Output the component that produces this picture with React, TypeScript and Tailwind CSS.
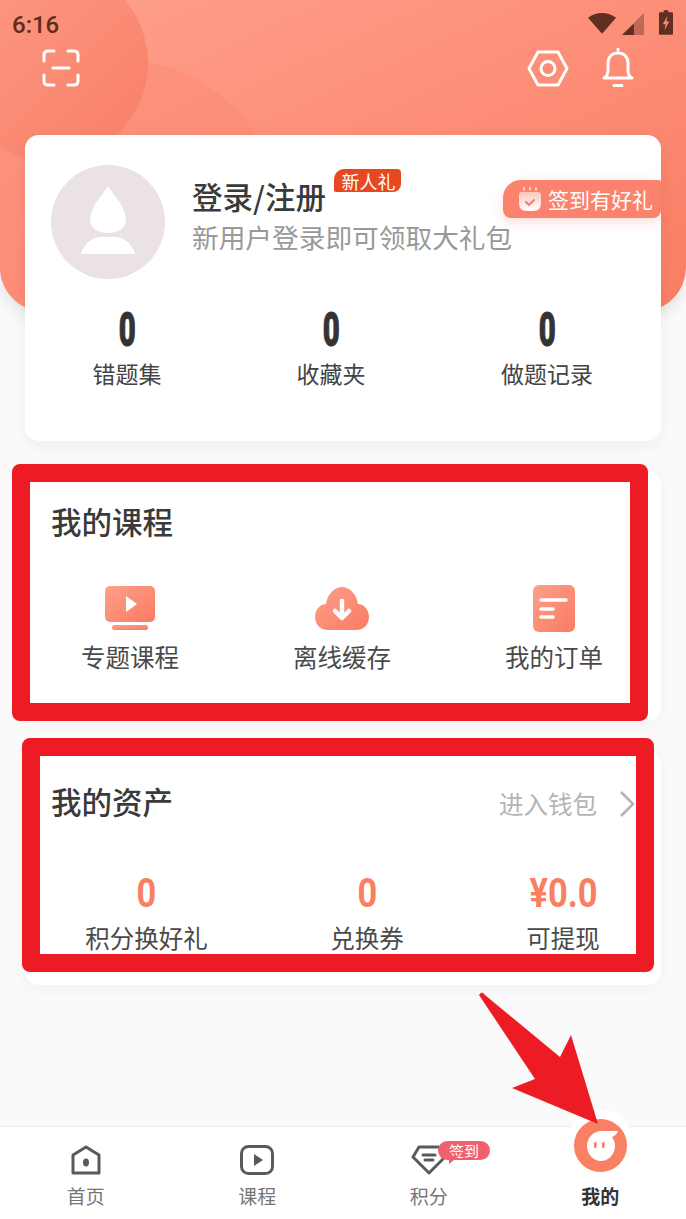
import type { ReactNode } from "react"

const stats = [
  { value: "0", label: "错题集", w: "w-[204px]" },
  { value: "0", label: "收藏夹", w: "w-[204px]" },
  { value: "0", label: "做题记录", w: "w-[228px]" },
]

const assets = [
  { value: "0", label: "积分换好礼", w: "w-[243px]" },
  { value: "0", label: "兑换券", w: "w-[198px]" },
  { value: "¥0.0", label: "可提现", w: "w-[194px]" },
]

const Gradient = ({ id }: { id: string }) => (
  <defs>
    <linearGradient id={id} x1="0" y1="0" x2="1" y2="1">
      <stop offset="0" stopColor="#fda08c" />
      <stop offset="1" stopColor="#f97b60" />
    </linearGradient>
  </defs>
)

const PlayIcon = () => (
  <svg width="52" height="44" viewBox="0 0 52 44">
    <Gradient id="tv" />
    <rect x="1" y="0" width="50" height="36" rx="5" fill="url(#tv)" />
    <path d="M22 10 L33 18 L22 26 Z" fill="#fff" />
    <rect x="8" y="39" width="36" height="5" rx="2.5" fill="url(#tv)" />
  </svg>
)

const CloudIcon = () => (
  <svg width="54" height="43" viewBox="0 0 54 43">
    <Gradient id="cloud" />
    <path
      d="M13 43 C5 43 0 37 0 30 C0 23 5 17 11 17 C12 8 19 0 27 0 C35 0 42 8 43 17 C49 17 54 23 54 30 C54 37 49 43 41 43 Z"
      fill="url(#cloud)"
    />
    <path d="M27 14 V30 M20 24 L27 31 L34 24" fill="none" stroke="#fff" strokeWidth="4.5" strokeLinecap="round" strokeLinejoin="round" />
  </svg>
)

const OrderIcon = () => (
  <svg width="42" height="47" viewBox="0 0 42 47">
    <Gradient id="order" />
    <rect x="0" y="0" width="42" height="47" rx="6" fill="url(#order)" />
    <path d="M8 15 H33 M8 24 H20 M8 32 H20" stroke="#fff" strokeWidth="3.4" strokeLinecap="round" />
  </svg>
)

const CourseItem = ({ icon, label }: { icon: ReactNode; label: string }) => (
  <div className="flex w-[212px] flex-col items-center">
    <div className="flex h-[50px] items-center">{icon}</div>
    <span className="mt-[7px] text-[24.5px] leading-[34px] text-[#4a4a4a]">{label}</span>
  </div>
)

const NavItem = ({ icon, label, active }: { icon: ReactNode; label: string; active?: boolean }) => (
  <div className="relative flex flex-1 flex-col items-center pt-[15px]">
    <div className="flex h-[36px] items-center">{icon}</div>
    <span className={active ? "mt-[5px] text-[19px] leading-[26px] font-bold text-[#333]" : "mt-[5px] text-[19px] leading-[26px] text-[#757575]"}>
      {label}
    </span>
  </div>
)

export default function App() {
  return (
    <div className="relative flex h-[1219px] w-[686px] flex-col overflow-hidden bg-[#fafafa] font-['Noto_Sans_CJK_SC','Noto_Sans',sans-serif]">
      {/* top banner */}
      <header className="relative h-[312px] shrink-0 rounded-b-[45px] bg-gradient-to-br from-[#fea18d] via-[#fd8e78] to-[#f97d63] shadow-[0_6px_16px_rgba(0,0,0,0.1)]">
        <div className="absolute inset-0 overflow-hidden rounded-b-[45px]">
          <div className="absolute top-[60px] left-[-40px] h-[320px] w-[320px] rounded-full bg-[#fb8a74]/50" />
          <div className="absolute top-[-35px] left-[-48px] h-[196px] w-[196px] rounded-full bg-gradient-to-br from-[#fc9a85] to-[#f97f66]" />
        </div>
        <div className="relative flex h-[48px] items-start justify-between pt-[9px] pr-[13px] pl-[12px]">
          <span className="font-['Roboto',sans-serif] text-[24px] leading-[32px] font-medium text-[#5f2c20]">6:16</span>
          <div className="flex items-start pt-[1px]">
            <svg width="30" height="23" viewBox="0 0 32 24" className="mt-[1px]">
              <path d="M1 7 C9 0 23 0 31 7 L16 24 Z" fill="#5f2f23" />
            </svg>
            <svg width="22" height="22" viewBox="0 0 22 22" className="mt-[3px] ml-[5px]">
              <path d="M22 0 V22 H0 Z" fill="#5f2f23" fillOpacity="0.4" />
              <path d="M12 10.5 V22 H0 Z" fill="#5f2f23" />
            </svg>
            <svg width="14" height="25" viewBox="0 0 15 26" className="ml-[15px]">
              <path d="M5 0 H10 V2 H14 Q15 2 15 3 V25 Q15 26 14 26 H1 Q0 26 0 25 V3 Q0 2 1 2 H5 Z" fill="#5f2f23" />
              <path d="M9 6 L4 15 H7 L6 21 L11 12 H8 Z" fill="#f98a74" />
            </svg>
          </div>
        </div>
        <div className="relative flex items-center justify-between pr-[52px] pl-[42px]">
          <svg width="38" height="38" viewBox="0 0 38 38" fill="none" stroke="#fff" strokeWidth="3" strokeLinecap="round">
            <path d="M12 2 H6 Q2 2 2 6 V12 M26 2 H32 Q36 2 36 6 V12 M2 26 V32 Q2 36 6 36 H12 M36 26 V32 Q36 36 32 36 H26 M11 19 H27" />
          </svg>
          <div className="flex items-center gap-[33px]">
            <svg width="42" height="37" viewBox="0 0 42 37" fill="none" stroke="#fff" strokeWidth="3">
              <path d="M11 2 H31 L40 18.5 L31 35 H11 L2 18.5 Z" strokeLinejoin="round" />
              <circle cx="21" cy="18.5" r="7" />
            </svg>
            <svg width="32" height="40" viewBox="0 0 32 40" fill="none" stroke="#fff" strokeWidth="3" strokeLinecap="round" strokeLinejoin="round">
              <path d="M2 30 Q6 28 6 22 V15 C6 9 10 5 16 5 C22 5 26 9 26 15 V22 Q26 28 30 30 Z" />
              <path d="M16 1 V2 M12 37.5 H20" />
            </svg>
          </div>
        </div>
      </header>

      <main className="relative z-10 -mt-[177px] flex flex-1 flex-col gap-[30px] px-[25px]">
        {/* profile card */}
        <section className="relative h-[306px] rounded-[14px] bg-white shadow-[0_4px_16px_rgba(0,0,0,0.05)]">
          <div className="flex items-start pt-[30px] pl-[26px]">
            <div className="flex h-[114px] w-[114px] items-center justify-center rounded-full bg-[#ebe2e3] pb-[4px]">
              <svg width="56" height="68" viewBox="0 0 56 68" fill="#fff">
                <path d="M28 0 C36 12 46 22 46 34 C46 42 38 47 28 47 C18 47 10 42 10 34 C10 22 20 12 28 0 Z" />
                <path d="M1 68 C3 58 13 51 20 51 H36 C43 51 53 58 55 68 Z" />
              </svg>
            </div>
            <div className="mt-[9px] ml-[27px] flex flex-col">
              <div className="flex items-start">
                <span className="text-[30.5px] leading-[44px] font-medium text-[#3a3a3a]">登录/注册</span>
                <span className="mt-[-5px] ml-[8px] flex h-[23px] w-[67px] items-center justify-center rounded-tl-[10px] rounded-tr-[4px] rounded-br-[8px] rounded-bl-[2px] bg-[#e8481f] pl-[2px] text-[18px] leading-none text-white">
                  新人礼
                </span>
              </div>
              <span className="mt-[1px] text-[26.7px] leading-[36px] text-[#999]">新用户登录即可领取大礼包</span>
            </div>
          </div>
          <div className="absolute top-[45px] right-0 flex h-[38px] w-[158px] items-center rounded-tl-[18px] rounded-tr-[2px] rounded-br-[8px] rounded-bl-[8px] bg-[#fb826c] pl-[16px] shadow-[0_4px_12px_rgba(249,125,99,0.25)]">
            <svg width="22" height="24" viewBox="0 0 22 24">
              <defs>
                <linearGradient id="cal" x1="0" y1="0" x2="0" y2="1">
                  <stop offset="0" stopColor="#fff" stopOpacity="0.55" />
                  <stop offset="1" stopColor="#fff" />
                </linearGradient>
              </defs>
              <path d="M5 0 V3 M11 0 V3 M17 0 V3" stroke="#fff" strokeOpacity="0.7" strokeWidth="1.6" strokeLinecap="round" />
              <path d="M0 8 Q0 5 3 5 H19 Q22 5 22 8 V16 Q22 24 14 24 H8 Q0 24 0 16 Z" fill="url(#cal)" />
              <path d="M7 15 L10 18 L15 13" fill="none" stroke="#f97d63" strokeWidth="2" strokeLinecap="round" strokeLinejoin="round" />
            </svg>
            <span className="ml-[7px] text-[21px] leading-none whitespace-nowrap text-white">签到有好礼</span>
          </div>
          <div className="mt-[25px] flex">
            {stats.map((item, index) => (
              <div key={index} className={`flex flex-col items-center ${item.w}`}>
                <span className="inline-block scale-x-[0.6] font-['Roboto',sans-serif] text-[49px] leading-[52px] font-black text-[#333] [-webkit-text-stroke:1px_#333]">{item.value}</span>
                <span className="text-[23px] leading-[34px] text-[#444]">{item.label}</span>
              </div>
            ))}
          </div>
        </section>

        {/* course shortcuts */}
        <section className="h-[250px] rounded-[14px] bg-white pt-[28px] shadow-[0_4px_16px_rgba(0,0,0,0.04)]">
          <h3 className="pl-[26px] text-[30.5px] leading-[44px] font-medium text-[#3a3a3a]">我的课程</h3>
          <div className="mt-[40px] -ml-[1px] flex">
            <CourseItem icon={<PlayIcon />} label="专题课程" />
            <CourseItem icon={<CloudIcon />} label="离线缓存" />
            <CourseItem icon={<OrderIcon />} label="我的订单" />
          </div>
        </section>

        {/* wallet */}
        <section className="h-[234px] rounded-[14px] bg-white pt-[28px] shadow-[0_4px_16px_rgba(0,0,0,0.04)]">
          <div className="flex items-center justify-between pr-[26px] pl-[26px]">
            <h3 className="text-[30.5px] leading-[44px] font-medium text-[#3a3a3a]">我的资产</h3>
            <div className="mt-[6px] flex items-center gap-[22px]">
              <span className="text-[24.5px] leading-[34px] text-[#b4b4b4]">进入钱包</span>
              <svg width="16" height="28" viewBox="0 0 16 28" fill="none" stroke="#b4b4b4" strokeWidth="2.6">
                <path d="M2 2 L14 14 L2 26" />
              </svg>
            </div>
          </div>
          <div className="mt-[50px] flex">
            {assets.map((item, index) => (
              <div key={index} className={`flex flex-col items-center ${item.w}`}>
                <span className="inline-block scale-x-[0.86] font-['Roboto',sans-serif] text-[40px] leading-[42px] font-bold text-[#f97f63]">{item.value}</span>
                <span className="mt-[6px] text-[24.5px] leading-[34px] text-[#4a4a4a]">{item.label}</span>
              </div>
            ))}
          </div>
        </section>
      </main>

      {/* bottom tab bar */}
      <nav className="relative z-20 flex h-[93px] shrink-0 border-t border-[#eeeeee] bg-white">
        <NavItem
          label="首页"
          icon={
            <svg width="30" height="30" viewBox="0 0 30 30" fill="none" stroke="#5a5a5a" strokeWidth="3" strokeLinejoin="round">
              <path d="M2 10 L15 2 L28 10 V28 H2 Z" />
              <ellipse cx="15" cy="17.5" rx="3" ry="4" fill="#5a5a5a" stroke="none" />
            </svg>
          }
        />
        <NavItem
          label="课程"
          icon={
            <svg width="34" height="30" viewBox="0 0 34 30" fill="none">
              <rect x="1.5" y="1.5" width="31" height="27" rx="7" stroke="#5a5a5a" strokeWidth="3" />
              <path d="M14 9 L23 15 L14 21 Z" fill="#5a5a5a" />
            </svg>
          }
        />
        <NavItem
          label="积分"
          icon={
            <svg width="36" height="30" viewBox="0 0 36 30" fill="none" stroke="#5a5a5a" strokeWidth="3" strokeLinejoin="round">
              <path d="M8 2 H28 L34 12 L18 28 L2 12 Z" />
              <path d="M12 10 H24 M14 15 H22" strokeLinecap="round" />
            </svg>
          }
        />
        <NavItem active label="我的" icon={<span className="h-[36px] w-[36px]" />} />
        {/* 签到 bubble over the points tab */}
        <div className="absolute top-[14px] left-[438px] flex h-[19px] w-[52px] items-center justify-center rounded-full bg-[#f0616d] text-[15px] leading-none text-white">
          签到
        </div>
        <div className="absolute top-[29px] left-[449px] h-0 w-0 border-t-[8px] border-r-[10px] border-t-[#f0616d] border-r-transparent" />
        {/* raised avatar on the active tab */}
        <div className="absolute top-[-18px] left-[567px] h-[66px] w-[66px] rounded-full bg-white" />
        <div className="absolute top-[-8px] left-[574px] flex h-[53px] w-[53px] items-center justify-center rounded-full bg-[#f98062]">
          <svg width="32" height="30" viewBox="0 0 32 30" className="ml-[5px]">
            <path d="M0 15 C0 6 7 0 15 0 H31 C30 3 28 5 25 6 C27 9 28 12 28 15 C28 23 22 30 14 30 C6 30 0 23 0 15 Z" fill="#fff" />
            <rect x="7" y="11" width="2.6" height="6" rx="1.3" fill="#f98062" />
            <rect x="15" y="11" width="2.6" height="6" rx="1.3" fill="#f98062" />
          </svg>
        </div>
      </nav>

      {/* red markup drawn over the screen */}
      <div className="pointer-events-none absolute top-[464px] left-[12px] z-30 h-[257px] w-[636px] rounded-[8px] border-[18px] border-[#ed1c24]" />
      <div className="pointer-events-none absolute top-[738px] left-[22px] z-30 h-[234px] w-[632px] rounded-[8px] border-[18px] border-[#ed1c24]" />
      <svg className="pointer-events-none absolute top-[990px] left-[476px] z-30" width="126" height="140" viewBox="0 0 126 140">
        <path d="M3 5 Q6 0 9 5 L84 67 L95 45 L122 134 L36 98 L59 89 Z" fill="#ed1c24" />
      </svg>
    </div>
  )
}
